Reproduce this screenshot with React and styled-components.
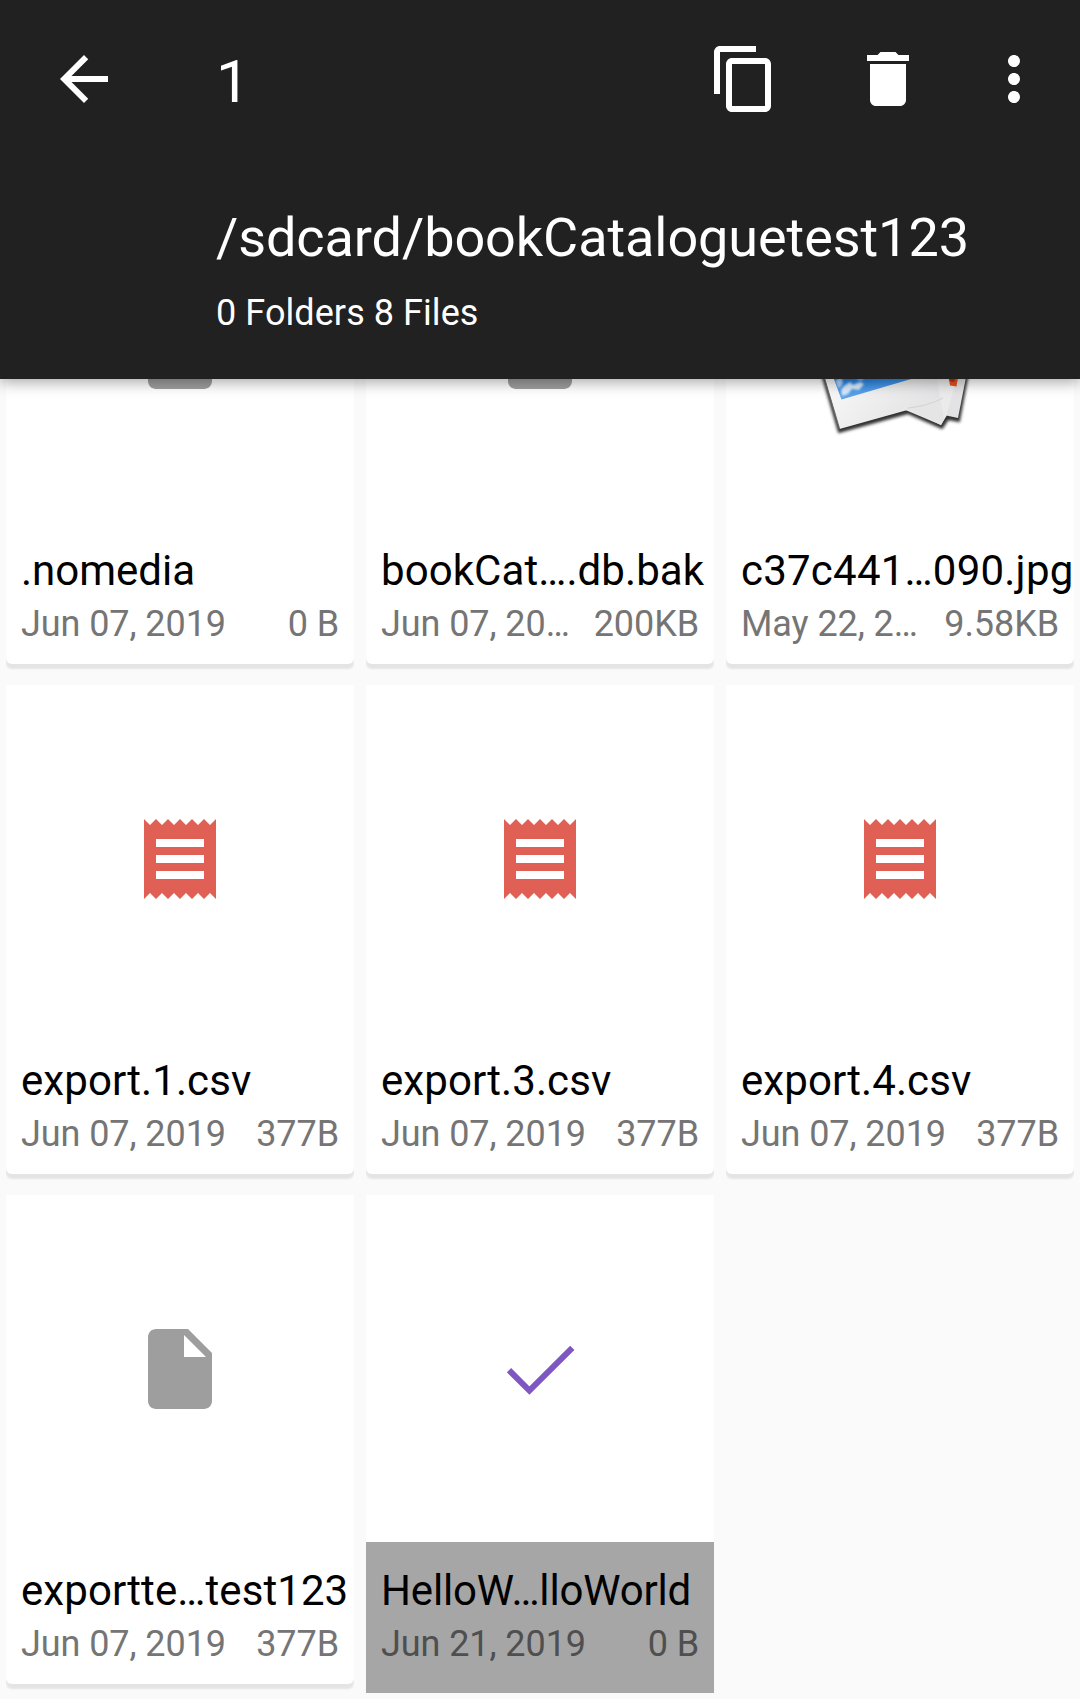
import React from "react";
import styled, { createGlobalStyle } from "styled-components";

const GlobalStyle = createGlobalStyle`
  * { box-sizing: border-box; }
  body {
    margin: 0;
    background: #fafafa;
    font-family: Roboto, "Noto Sans", sans-serif;
    overflow: hidden;
  }
`;

const Screen = styled.div`
  display: flex;
  flex-direction: column;
  width: 1080px;
  height: 1699px;
  overflow: hidden;
  background: #fafafa;
`;

const Header = styled.header`
  position: relative;
  z-index: 1;
  flex: none;
  height: 379px;
  background: #212121;
  color: #fff;
  box-shadow: 0 3px 14px rgba(0, 0, 0, 0.36);
`;

const Toolbar = styled.div`
  display: flex;
  align-items: center;
  height: 158px;
  padding: 0 30px 0 48px;
`;

const Count = styled.div`
  flex: 1;
  margin-left: 96px;
  font-size: 60px;
  line-height: 70px;
  padding-top: 6px;
`;

const IconButton = styled.button`
  display: flex;
  width: 72px;
  height: 72px;
  margin-left: ${(p) => p.$gap || 0}px;
  padding: 0;
  border: 0;
  background: none;
  color: inherit;
`;

const Location = styled.div`
  padding: 48px 0 0 216px;
  white-space: nowrap;
`;

const Path = styled.div`
  font-size: 54px;
  line-height: 64px;
  letter-spacing: -0.08px;
`;

const Summary = styled.div`
  margin-top: 22px;
  font-size: 36px;
  line-height: 42px;
  letter-spacing: 0.07px;
`;

const Scroller = styled.main`
  flex: 1;
  min-height: 0;
  overflow: hidden;
`;

const Grid = styled.div`
  display: grid;
  grid-template-columns: repeat(3, 348px);
  grid-auto-rows: 498px;
  gap: 12px;
  margin-top: -204px;
  padding: 0 6px;
`;

const Cell = styled.div`
  overflow: hidden;
`;

const Card = styled.article`
  display: flex;
  flex-direction: column;
  height: ${(p) => (p.$selected ? 498 : 489)}px;
  background: #fff;
  border-radius: ${(p) => (p.$selected ? "0" : "0 0 6px 6px")};
  box-shadow: 0 5px 2px rgba(0, 0, 0, 0.085);
`;

const Preview = styled.div`
  display: flex;
  align-items: center;
  justify-content: center;
  height: 347px;
  padding-top: 1px;
`;

const Details = styled.div`
  flex: 1;
  padding: 24px 15px 0;
  background: ${(p) => (p.$selected ? "#a6a6a6" : "transparent")};
  color: ${(p) => (p.$selected ? "#4f4f4f" : "#757575")};
`;

const Name = styled.div`
  color: #000;
  font-size: 42px;
  line-height: 50px;
  letter-spacing: ${(p) => p.$tracking ?? 0.08}px;
  white-space: nowrap;
`;

const Meta = styled.div`
  display: flex;
  justify-content: space-between;
  margin-top: 7px;
  font-size: 36px;
  line-height: 42px;
  letter-spacing: -0.08px;
  white-space: nowrap;
`;

const Glyph = ({ d, size = 72, color = "currentColor" }) => (
  <svg width={size} height={size} viewBox="0 0 24 24" fill={color}>
    <path d={d} />
  </svg>
);

const BACK = "M20 11H7.83l5.59-5.59L12 4l-8 8 8 8 1.41-1.41L7.83 13H20v-2z";
const COPY =
  "M16 1H4c-1.1 0-2 .9-2 2v14h2V3h12V1zm3 4H8c-1.1 0-2 .9-2 2v14c0 1.1.9 2 2 2h11c1.1 0 2-.9 2-2V7c0-1.1-.9-2-2-2zm0 16H8V7h11v14z";
const TRASH =
  "M6 19c0 1.1.9 2 2 2h8c1.1 0 2-.9 2-2V7H6v12zM19 4h-3.5l-1-1h-5l-1 1H5v2h14V4z";
const MORE =
  "M12 8c1.1 0 2-.9 2-2s-.9-2-2-2-2 .9-2 2 .9 2 2 2zm0 2c-1.1 0-2 .9-2 2s.9 2 2 2 2-.9 2-2-.9-2-2-2zm0 6c-1.1 0-2 .9-2 2s.9 2 2 2 2-.9 2-2-.9-2-2-2z";
const RECEIPT =
  "M18 17H6v-2h12v2zm0-4H6v-2h12v2zm0-4H6V7h12v2zM3 22l1.5-1.5L6 22l1.5-1.5L9 22l1.5-1.5L12 22l1.5-1.5L15 22l1.5-1.5L18 22l1.5-1.5L21 22V2l-1.5 1.5L18 2l-1.5 1.5L15 2l-1.5 1.5L12 2l-1.5 1.5L9 2 7.5 3.5 6 2 4.5 3.5 3 2v20z";
const FILE =
  "M6 2c-1.1 0-1.99.9-1.99 2L4 20c0 1.1.89 2 1.99 2H18c1.1 0 2-.9 2-2V8l-6-6H6zm7 7V3.5L18.5 9H13z";

const Check = () => (
  <svg width="96" height="96" viewBox="0 0 96 96" fill="none">
    <path d="M17 49.2L37.400 69.600L80.300 26.800" stroke="#7e57c2" strokeWidth="6" />
  </svg>
);

const Photos = () => (
  <svg width="180" height="180" viewBox="0 0 180 180">
    <defs>
      <linearGradient id="paper" x1="0" y1="0" x2="1" y2="1">
        <stop offset="0.4" stopColor="#fafafa" />
        <stop offset="1" stopColor="#dedee0" />
      </linearGradient>
      <linearGradient id="sky" x1="0" y1="0" x2="0.1" y2="1">
        <stop offset="0" stopColor="#1258b8" />
        <stop offset="0.85" stopColor="#2380e0" />
        <stop offset="1" stopColor="#5fa4ea" />
      </linearGradient>
      <filter id="soft" x="-20%" y="-20%" width="140%" height="140%">
        <feGaussianBlur stdDeviation="1.5" />
      </filter>
      <filter id="cloud" x="-20%" y="-20%" width="140%" height="140%">
        <feGaussianBlur stdDeviation="0.8" />
      </filter>
    </defs>
    <path
      d="M-7 50L29 173L98 154L132 169L138 160L149 162L168 60"
      fill="#333"
      stroke="#333"
      strokeWidth="2"
      filter="url(#soft)"
    />
    <path d="M95 45L167 62L148 159L110 151Z" fill="#e3e3e5" />
    <path d="M60 40L154 90L136.500 157L131 166L86 147Z" fill="#ebebec" />
    <path d="M-6 50L110 12L130 139L97.500 151L29.500 170Z" fill="url(#paper)" />
    <path d="M97 150L130 138L134 160L131 166Z" fill="#e5e5e6" />
    <path d="M98 149Q118 147 133 139" fill="none" stroke="#d3d3d5" strokeWidth="1" />
    <path d="M137.500 110L149.500 110L146.500 127.500L140 126.500Z" fill="#e0561c" />
    <path d="M137.500 112L148 112L144 123L139.500 122Z" fill="#c62a10" />
    <path d="M1 58L95 28L108 118L31.500 140.500Z" fill="url(#sky)" />
    <g fill="#e8f3fd" filter="url(#cloud)">
      <path d="M25 122L31 118L33 124L29 130Z" opacity="0.7" />
      <path d="M34 127L40 123L43 126L50 123L54 125L49 131L42 130L38 135L32 137L31 131Z" opacity="0.9" />
      <path d="M46 120L55 118L51 122Z" opacity="0.6" />
    </g>
    <path d="M-5 54L29.500 170" stroke="#666" strokeWidth="1.3" />
  </svg>
);

const previews = {
  file: <Glyph d={FILE} size={96} color="#9e9e9e" />,
  sheet: <Glyph d={RECEIPT} size={96} color="#e06055" />,
  photos: <Photos />,
  check: <Check />,
};

const files = [
  { name: ".nomedia", date: "Jun 07, 2019", size: "0 B", kind: "file", tracking: 0 },
  { name: "bookCat….db.bak", date: "Jun 07, 20…", size: "200KB", kind: "file" },
  { name: "c37c441…090.jpg", date: "May 22, 2…", size: "9.58KB", kind: "photos", tracking: 0.22 },
  { name: "export.1.csv", date: "Jun 07, 2019", size: "377B", kind: "sheet" },
  { name: "export.3.csv", date: "Jun 07, 2019", size: "377B", kind: "sheet" },
  { name: "export.4.csv", date: "Jun 07, 2019", size: "377B", kind: "sheet" },
  { name: "exportte…test123", date: "Jun 07, 2019", size: "377B", kind: "file" },
  { name: "HelloW…lloWorld", date: "Jun 21, 2019", size: "0 B", kind: "check", selected: true, tracking: -0.16 },
];

export default function App() {
  return (
    <>
      <GlobalStyle />
      <Screen>
        <Header>
          <Toolbar>
            <IconButton aria-label="Back"><Glyph d={BACK} /></IconButton>
            <Count>1</Count>
            <IconButton aria-label="Copy"><Glyph d={COPY} /></IconButton>
            <IconButton aria-label="Delete" $gap={72}><Glyph d={TRASH} /></IconButton>
            <IconButton aria-label="More" $gap={54}><Glyph d={MORE} /></IconButton>
          </Toolbar>
          <Location>
            <Path>/sdcard/bookCataloguetest123</Path>
            <Summary>0 Folders 8 Files</Summary>
          </Location>
        </Header>
        <Scroller>
          <Grid>
            {files.map((f) => (
              <Cell key={f.name}>
                <Card $selected={f.selected}>
                  <Preview>{previews[f.kind]}</Preview>
                  <Details $selected={f.selected}>
                    <Name $tracking={f.tracking}>{f.name}</Name>
                    <Meta>
                      <span>{f.date}</span>
                      <span>{f.size}</span>
                    </Meta>
                  </Details>
                </Card>
              </Cell>
            ))}
          </Grid>
        </Scroller>
      </Screen>
    </>
  );
}
